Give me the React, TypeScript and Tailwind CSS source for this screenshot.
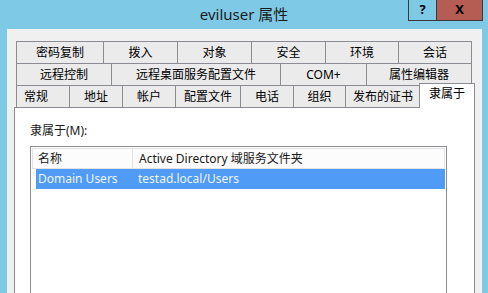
const row1 = [
  { label: "密码复制", w: "w-[87px]" },
  { label: "拨入", w: "w-[74px]" },
  { label: "对象", w: "w-[74px]" },
  { label: "安全", w: "w-[74px]" },
  { label: "环境", w: "w-[73px]" },
  { label: "会话", w: "w-[74px]" },
];

const row2 = [
  { label: "远程控制", w: "w-[95px]" },
  { label: "远程桌面服务配置文件", w: "w-[169px]" },
  { label: "COM+", w: "w-[86px]" },
  { label: "属性编辑器", w: "w-[106px]" },
];

const row3 = [
  { label: "常规", w: "w-[53px]", pad: "justify-start pl-[7px]" },
  { label: "地址", w: "w-[53px]" },
  { label: "帐户", w: "w-[53px]" },
  { label: "配置文件", w: "w-[65px]" },
  { label: "电话", w: "w-[53px]" },
  { label: "组织", w: "w-[52px]" },
  { label: "发布的证书", w: "w-[75px]" },
];

function Tab({ label, w, last, pad }: { label: string; w: string; last?: boolean; pad?: string }) {
  return (
    <div
      className={`${w} h-[22px] flex items-center ${pad ?? "justify-center"} border-t border-l border-[#8c8c94] bg-[#ebebeb] text-[12px] leading-none text-black ${last ? "border-r" : ""}`}
    >
      {label}
    </div>
  );
}

export default function App() {
  return (
    <div
      className="w-[488px] h-[293px] overflow-hidden bg-[#7ec9e6]"
      style={{ fontFamily: '"Noto Sans", "Noto Sans CJK SC", sans-serif' }}
    >
      <div className="h-[340px] flex flex-col">
        {/* title bar */}
        <div className="h-[29px] grid grid-cols-[1fr_auto_1fr] shrink-0">
          <div />
          <div className="pt-[4px] text-[15px] leading-[20px] text-[#1b1b1b]">eviluser 属性</div>
          <div className="flex justify-end items-start pr-[5px]">
            <div className="flex h-[21px] border border-t-0 border-[#3a3a3a]">
              <div className="w-[27px] flex items-center justify-center text-[13px] font-bold text-black">?</div>
              <div className="w-[46px] flex items-center justify-center bg-[#b55c53] border-l border-[#3a3a3a] text-[13px] font-bold text-black">
                X
              </div>
            </div>
          </div>
        </div>

        {/* client area */}
        <div className="flex-1 ml-[7px] mr-[6px] bg-[#f0f0f0] flex flex-col pt-[12px]">
          <div className="flex ml-[9px]">
            {row1.map((t, i) => (
              <Tab key={t.label} {...t} last={i === row1.length - 1} />
            ))}
          </div>
          <div className="flex ml-[9px]">
            {row2.map((t, i) => (
              <Tab key={t.label} {...t} last={i === row2.length - 1} />
            ))}
          </div>
          <div className="flex items-end ml-[9px] -mt-[2px] relative z-10">
            {row3.map((t) => (
              <Tab key={t.label} {...t} />
            ))}
            <div className="w-[56px] h-[25px] -ml-px -mb-px flex items-start justify-center pt-[4px] border border-b-0 border-[#8c8c94] bg-white text-[12px] leading-none text-black">
              隶属于
            </div>
          </div>

          {/* panel */}
          <div className="flex-1 ml-[7px] mr-[7px] border border-[#8c8c94] bg-white pl-[15px] pr-[27px] pt-[15px] flex flex-col">
            <div className="text-[12px] leading-[16px] text-[#1a1a1a]">隶属于(M):</div>
            <div className="mt-[7px] flex-1 border border-[#8c8c94] px-[1px] pt-[1px] flex flex-col">
              <div className="h-[21px] flex bg-[#fcfcfc] border border-[#e3e3e3] text-[12px] text-[#1a1a1a]">
                <div className="w-[100px] flex items-center pl-[5px] border-r border-[#e3e3e3]">名称</div>
                <div className="flex-1 flex items-center pl-[6px]">Active Directory 域服务文件夹</div>
              </div>
              <div className="h-[20px] ml-[4px] flex bg-[#509bf5] text-[12px] text-[#eef5ff]">
                <div className="w-[102px] flex items-center pl-[2px]">Domain Users</div>
                <div className="flex-1 flex items-center">testad.local/Users</div>
              </div>
            </div>
          </div>
        </div>
      </div>
    </div>
  );
}
